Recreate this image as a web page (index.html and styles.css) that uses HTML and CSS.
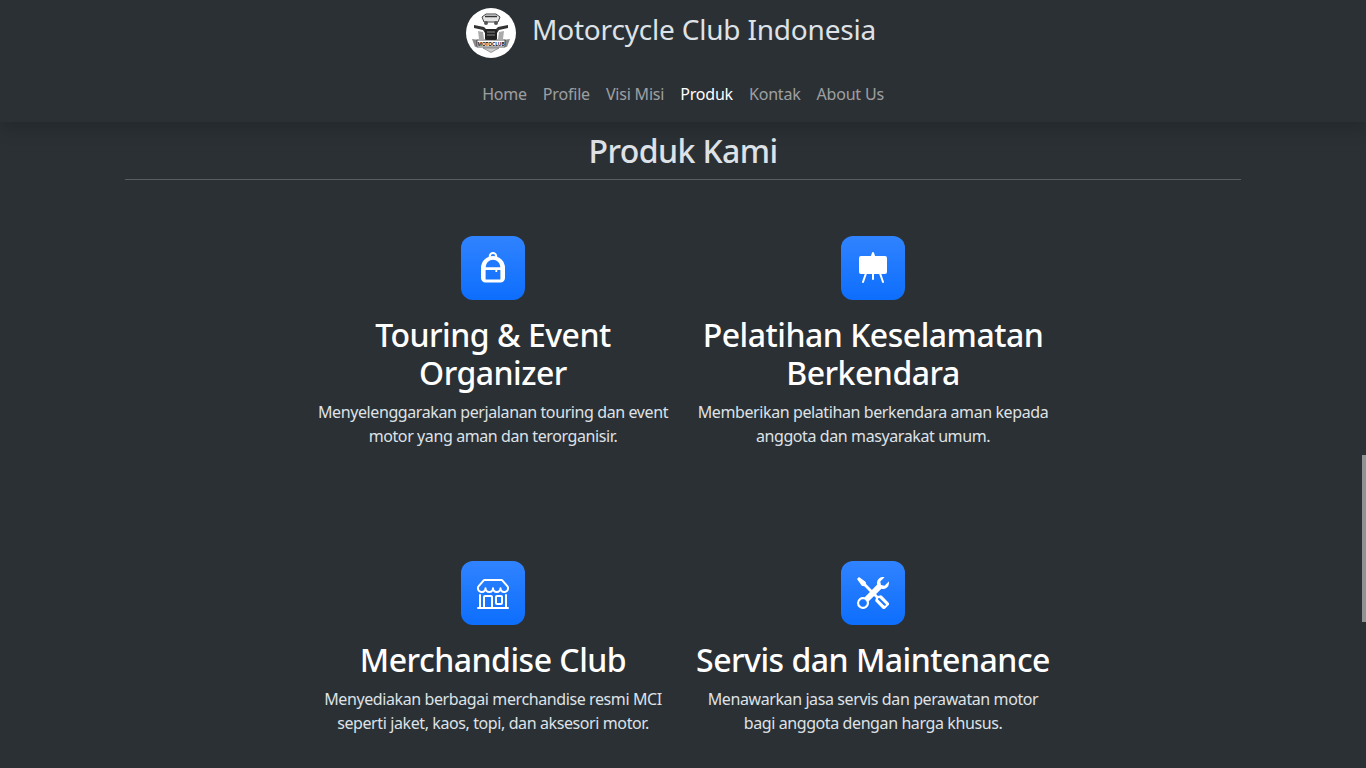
FILE: index.html
```html
<!DOCTYPE html>
<html lang="en">
<head>
    <meta charset="UTF-8">
    <meta name="viewport" content="width=device-width, initial-scale=1.0">
    <title>Motorcycle Club Indonesia</title>
    <link rel="stylesheet" href="styles.css">
</head>
<body>
    <header class="site-header">
        <a class="brand" href="#">
            <svg class="brand-logo" viewBox="0 0 50 50" aria-hidden="true">
                <circle cx="25" cy="25" r="25" fill="#fff"/>
                <path d="M16 9l4-3h10l4 3-2 5H18z" fill="#e4e4e4" stroke="#444" stroke-width="1"/>
                <path d="M19 8.500h12" stroke="#333" stroke-width="1.500"/>
                <circle cx="20" cy="15" r="2" fill="#555"/>
                <circle cx="30" cy="15" r="2" fill="#555"/>
                <path d="M8 17l10 2 3 3h8l3-3 10-2v3l-9 2-2 3h-12l-2-3-9-2z" fill="#333"/>
                <path d="M12 23l5 1 1 7h-5zM38 23l-5 1-1 7h5z" fill="#aaa"/>
                <rect x="19" y="21" width="12" height="11" rx="1.500" fill="#222"/>
                <path d="M21 24h8M21 27h8" stroke="#888" stroke-width="1"/>
                <path d="M6 31l7 1v6l-4 1zM44 31l-7 1v6l4 1z" fill="#8a8a8a"/>
                <rect x="11" y="32" width="28" height="7" fill="#fff" stroke="#333" stroke-width=".8"/>
                <text class="logo-text" x="25" y="37.700" text-anchor="middle">MOTOCLUB</text>
                <path d="M17 40h16l-8 4.500z" fill="#ccc" stroke="#666" stroke-width=".6"/>
            </svg>
            <span class="brand-name">Motorcycle Club Indonesia</span>
        </a>
        <nav class="main-nav">
            <a href="#">Home</a>
            <a href="#">Profile</a>
            <a href="#">Visi Misi</a>
            <a href="#" class="active">Produk</a>
            <a href="#">Kontak</a>
            <a href="#">About Us</a>
        </nav>
    </header>

    <main class="container">
        <h2 class="section-title">Produk Kami</h2>
        <hr class="section-rule">

        <div class="product-grid">
            <div class="product">
                <div class="product-icon">
                    <svg viewBox="0 0 16 16" fill="currentColor" fill-rule="evenodd">
                        <path d="M8 0a2.100 2.100 0 0 1 2.100 2.100v1h-1V2.100a1.100 1.100 0 0 0-2.200 0v1h-1v-1A2.100 2.100 0 0 1 8 0z"/>
                        <path d="M2 8a6 6 0 0 1 12 0v5a2.300 2.300 0 0 1-2.300 2.300H4.300A2.300 2.300 0 0 1 2 13zM4.300 7.600a3.700 3.700 0 0 1 7.400 0zM4.300 9h4.900v1h.9V9h1.600v4.700H4.300z"/>
                    </svg>
                </div>
                <h3>Touring &amp; Event Organizer</h3>
                <p>Menyelenggarakan perjalanan touring dan event motor yang aman dan terorganisir.</p>
            </div>
            <div class="product">
                <div class="product-icon">
                    <svg viewBox="0 0 16 16" fill="currentColor">
                        <path d="M8.473.337a.5.5 0 0 0-.946 0L6.954 2H2a1 1 0 0 0-1 1v7a1 1 0 0 0 1 1h1.850l-1.323 3.837a.5.5 0 1 0 .946.326L4.908 11H7.500v2.500a.5.5 0 0 0 1 0V11h2.592l1.435 4.163a.5.5 0 0 0 .946-.326L12.150 11H14a1 1 0 0 0 1-1V3a1 1 0 0 0-1-1H9.046z"/>
                    </svg>
                </div>
                <h3>Pelatihan Keselamatan Berkendara</h3>
                <p>Memberikan pelatihan berkendara aman kepada anggota dan masyarakat umum.</p>
            </div>
            <div class="product">
                <div class="product-icon">
                    <svg viewBox="0 0 16 16" fill="currentColor">
                        <path d="M2.970 1.350A1 1 0 0 1 3.730 1h8.540a1 1 0 0 1 .76.35l2.609 3.044A1.500 1.500 0 0 1 16 5.370v.255a2.375 2.375 0 0 1-4.250 1.458A2.370 2.370 0 0 1 9.875 8 2.370 2.370 0 0 1 8 7.083 2.370 2.370 0 0 1 6.125 8a2.370 2.370 0 0 1-1.875-.917A2.375 2.375 0 0 1 0 5.625V5.370a1.500 1.500 0 0 1 .361-.976zm1.780 4.275a1.375 1.375 0 0 0 2.750 0 .5.5 0 0 1 1 0 1.375 1.375 0 0 0 2.750 0 .5.5 0 0 1 1 0 1.375 1.375 0 1 0 2.750 0V5.370a.5.5 0 0 0-.12-.325L12.270 2H3.730L1.120 5.045A.5.5 0 0 0 1 5.370v.255a1.375 1.375 0 0 0 2.750 0 .5.5 0 0 1 1 0M1.500 8.500A.5.5 0 0 1 2 9v6h1v-5a1 1 0 0 1 1-1h3a1 1 0 0 1 1 1v5h6V9a.5.5 0 0 1 1 0v6h.5a.5.5 0 0 1 0 1H.5a.5.5 0 0 1 0-1H1V9a.5.5 0 0 1 .5-.5M4 15h3v-5H4zm5-5a1 1 0 0 1 1-1h2a1 1 0 0 1 1 1v3a1 1 0 0 1-1 1h-2a1 1 0 0 1-1-1zm3 0h-2v3h2z"/>
                    </svg>
                </div>
                <h3>Merchandise Club</h3>
                <p>Menyediakan berbagai merchandise resmi MCI seperti jaket, kaos, topi, dan aksesori motor.</p>
            </div>
            <div class="product">
                <div class="product-icon">
                    <svg viewBox="0 0 16 16" fill="currentColor">
                        <path d="M1 0 0 1l2.200 3.081a1 1 0 0 0 .815.419h.07a1 1 0 0 1 .708.293l2.675 2.675-2.617 2.654A3.003 3.003 0 0 0 0 13a3 3 0 1 0 5.878-.851l2.654-2.617.968.968-.305.914a1 1 0 0 0 .242 1.023l3.270 3.270a.997.997 0 0 0 1.414 0l1.586-1.586a.997.997 0 0 0 0-1.414l-3.270-3.270a1 1 0 0 0-1.023-.242L10.500 9.500l-.96-.96 2.680-2.643A3.005 3.005 0 0 0 16 3q0-.405-.102-.777l-2.140 2.141L12 4l-.364-1.757L13.777.102a3 3 0 0 0-3.675 3.680L7.462 6.460 4.793 3.793a1 1 0 0 1-.293-.707v-.071a1 1 0 0 0-.419-.814zm9.646 10.646a.5.5 0 0 1 .708 0l2.914 2.915a.5.5 0 0 1-.707.707l-2.915-2.914a.5.5 0 0 1 0-.708M3 11l.471.242.529.026.287.445.445.287.026.529L5 13l-.242.471-.026.529-.445.287-.287.445-.529.026L3 15l-.471-.242L2 14.732l-.287-.445L1.268 14l-.026-.529L1 13l.242-.471.026-.529.445-.287.287-.445.529-.026z"/>
                    </svg>
                </div>
                <h3>Servis dan Maintenance</h3>
                <p>Menawarkan jasa servis dan perawatan motor bagi anggota dengan harga khusus.</p>
            </div>
        </div>
    </main>

    <div class="scroll-thumb"></div>
</body>
</html>
```

FILE: styles.css
```css
* {
    margin: 0;
    padding: 0;
    box-sizing: border-box;
}

html, body {
    height: 100%;
    overflow: hidden;
}

body {
    background: #2b3035;
    color: #dee2e6;
    font-family: 'Noto Sans', sans-serif;
    font-size: 16px;
    line-height: 24px;
}

a {
    text-decoration: none;
}

/* Header */
.site-header {
    position: relative;
    z-index: 2;
    height: 122px;
    padding-top: 8px;
    background: #2b3035;
    box-shadow: 0 8px 16px rgba(0, 0, 0, 0.15);
    display: flex;
    flex-direction: column;
    align-items: center;
}

.brand {
    display: flex;
    align-items: center;
    gap: 16px;
    margin-right: 24px;
    color: #dee2e6;
}

.brand-logo {
    width: 50px;
    height: 50px;
    flex-shrink: 0;
}

.logo-text {
    font-size: 4.800px;
    font-weight: 700;
    fill: #111;
}

.brand-name {
    font-size: 28px;
    line-height: 42px;
    letter-spacing: -0.2px;
    margin-bottom: 8px;
}

.main-nav {
    display: flex;
    margin-top: 16px;
}

.main-nav a {
    padding: 8px;
    letter-spacing: -0.2px;
    color: rgba(255, 255, 255, 0.55);
}

.main-nav a.active {
    color: #fff;
}

/* Produk */
.container {
    width: 1140px;
    margin: 0 auto;
    padding: 7px 12px 0;
}

.section-title {
    text-align: center;
    font-size: 32px;
    line-height: 43px;
    font-weight: 500;
    letter-spacing: -0.6px;
}

.section-rule {
    border: 0;
    border-top: 1px solid rgba(222, 226, 230, 0.25);
    margin-top: 7px;
}

.product-grid {
    display: grid;
    grid-template-columns: 380px 380px;
    grid-auto-rows: 325px;
    justify-content: center;
    margin-top: 56px;
}

.product {
    padding: 0 12px;
    text-align: center;
}

.product-icon {
    width: 64px;
    height: 64px;
    margin: 0 auto 16px;
    border-radius: 12px;
    background: linear-gradient(180deg, #3083ff, #0d6efd);
    color: #fff;
    display: flex;
    align-items: center;
    justify-content: center;
}

.product-icon svg {
    width: 32px;
    height: 32px;
}

.product h3 {
    color: #fff;
    font-size: 32px;
    line-height: 38px;
    font-weight: 500;
    letter-spacing: -0.5px;
    margin-bottom: 8px;
}

.product p {
    letter-spacing: -0.4px;
}

/* overlay scrollbar from the screenshot */
.scroll-thumb {
    position: fixed;
    top: 455px;
    right: 0;
    width: 4px;
    height: 167px;
    background: #8f9194;
}
```
